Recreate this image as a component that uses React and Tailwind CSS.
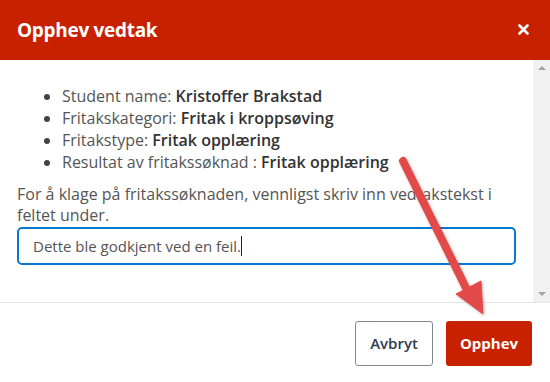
import React from "react";

const items = [
  { label: "Student name:", value: "Kristoffer Brakstad" },
  { label: "Fritakskategori:", value: "Fritak i kroppsøving" },
  { label: "Fritakstype:", value: "Fritak opplæring" },
  { label: "Resultat av fritakssøknad :", value: "Fritak opplæring" },
];

const App = () => {
  return (
    <div className="relative w-[550px] h-[382px] overflow-hidden bg-white font-['Open_Sans',sans-serif]">
      {/* Header */}
      <div className="h-[60px] bg-[#c82100] flex items-center justify-between pl-[17px] pr-[21px]">
        <h1 className="text-white text-[19px] font-bold tracking-[-0.3px]">Opphev vedtak</h1>
        <svg width="11" height="11" viewBox="0 0 11 11" className="mt-[-1px]">
          <path d="M1.5 1.5 L9.5 9.5 M9.5 1.5 L1.5 9.5" stroke="#fff" strokeWidth="2.6" strokeLinecap="round" />
        </svg>
      </div>

      {/* Body */}
      <div className="flex h-[242px]">
        <div className="flex-1 pt-[25px] pl-[17px] pr-[17px]">
          <ul className="list-disc pl-[45px] text-[16px] leading-[22px] text-[#555] marker:text-[#444]">
            {items.map((item) => (
              <li key={item.label}>
                {item.label} <span className="font-semibold text-[#333]">{item.value}</span>
              </li>
            ))}
          </ul>
          <p className="mt-[11px] text-[16px] leading-[21px] text-[#555]">
            For å klage på fritakssøknaden, vennligst skriv inn vedtakstekst i feltet under.
          </p>
          <div className="mt-[1px] h-[38px] border-2 border-[#0a78cf] rounded-[5px] flex items-center pl-[14px] text-[15px] text-[#555]">
            Dette ble godkjent ved en feil.
            <span className="inline-block w-px h-[20px] bg-[#222]" />
          </div>
        </div>
        <div className="w-[17px] bg-[#f1f1f1] flex flex-col items-center justify-between py-[6px]">
          <span className="w-0 h-0 border-l-[4px] border-r-[4px] border-b-[4px] border-l-transparent border-r-transparent border-b-[#a3a3a3]" />
          <span className="w-0 h-0 border-l-[4px] border-r-[4px] border-t-[4px] border-l-transparent border-r-transparent border-t-[#a3a3a3]" />
        </div>
      </div>

      {/* Footer */}
      <div className="border-t border-[#e6e6e6] flex justify-end gap-[13px] pt-[18px] pr-[18px]">
        <button className="h-[45px] w-[78px] rounded-[3px] border border-[#7d8a96] bg-white text-[15px] font-semibold text-[#2c3e50]">
          Avbryt
        </button>
        <button className="h-[45px] w-[86px] rounded-[3px] bg-[#c82100] text-[15px] font-bold text-white">
          Opphev
        </button>
      </div>

      {/* Annotation arrow */}
      <svg className="absolute inset-0 pointer-events-none" width="550" height="382" viewBox="0 0 550 382">
        <defs>
          <filter id="sh" x="-20%" y="-20%" width="140%" height="140%">
            <feDropShadow dx="1" dy="1" stdDeviation="1.5" floodColor="#000" floodOpacity="0.3" />
          </filter>
        </defs>
        <g filter="url(#sh)" fill="#e24a4a" stroke="#e24a4a">
          <line x1="403" y1="161" x2="467" y2="290" strokeWidth="8" strokeLinecap="round" />
          <polygon points="483,314 456,294 481,281" strokeWidth="1" strokeLinejoin="round" />
        </g>
      </svg>
    </div>
  );
};

export default App;
